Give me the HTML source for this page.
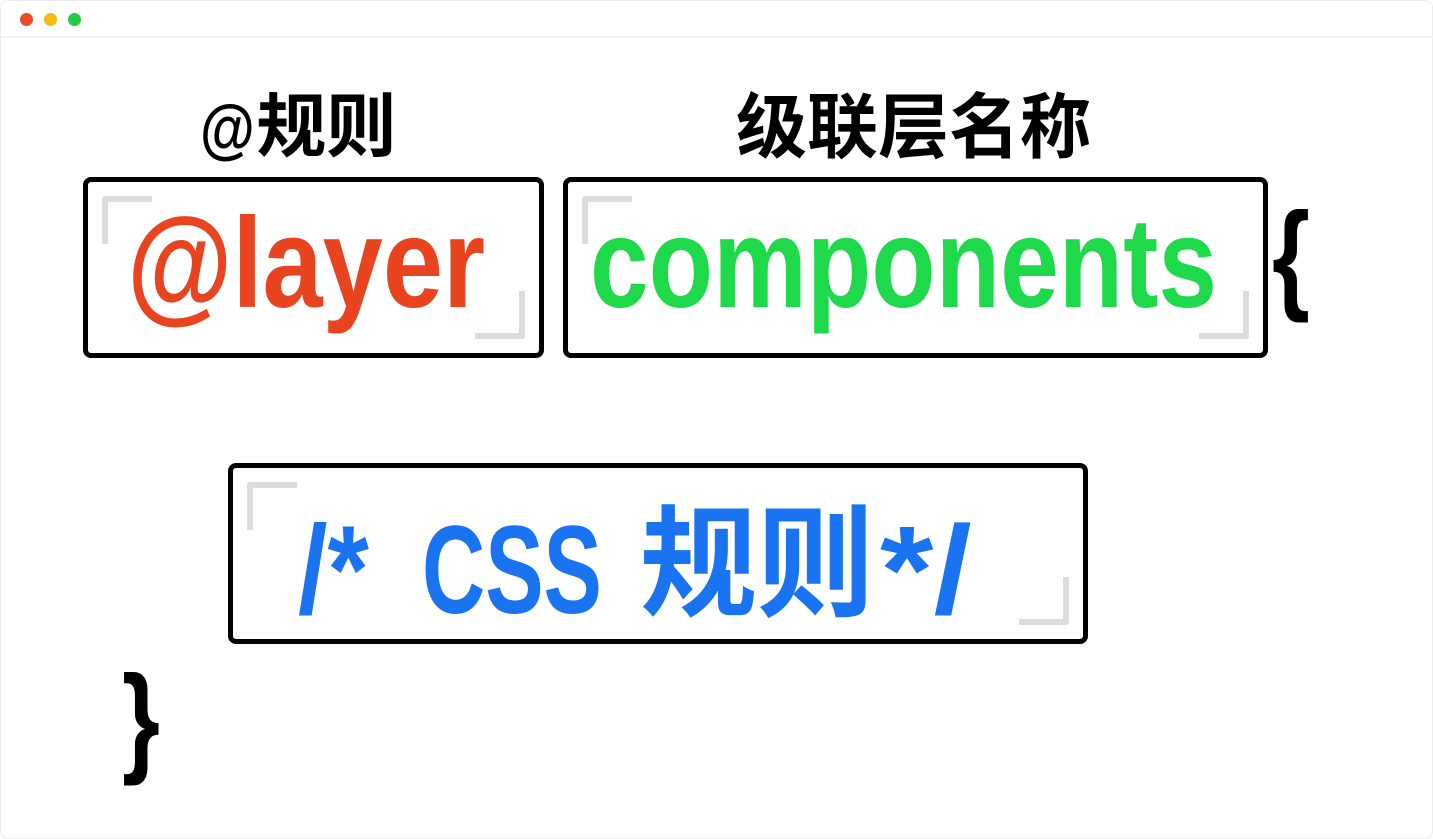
<!DOCTYPE html>
<html><head><meta charset="utf-8"><style>
html,body{margin:0;padding:0;background:#fff;}
body{width:1433px;height:839px;position:relative;overflow:hidden;font-family:"Liberation Sans","Noto Sans CJK SC",sans-serif;font-weight:bold;}
.frame{position:absolute;left:0;top:0;width:1431px;height:837px;border:1px solid #ececec;border-radius:8px;}
.bar{position:absolute;left:0;top:0;width:1433px;height:36px;border-bottom:2px solid #f2f2f2;}
.dot{position:absolute;top:13px;width:13px;height:13px;border-radius:50%;}
.box{position:absolute;border:5px solid #000;border-radius:8px;box-sizing:border-box;}
.tl,.br{position:absolute;width:50px;height:48px;box-sizing:border-box;border-color:#dcdcdc;border-style:solid;border-width:0;}
.tl{left:14px;top:14px;border-left-width:6px;border-top-width:6px;border-radius:3px 0 0 0;}
.br{right:14px;bottom:14px;border-right-width:6px;border-bottom-width:6px;border-radius:0 0 3px 0;}
.t{position:absolute;line-height:1;white-space:nowrap;transform-origin:left top;}
.cjk{font-family:"Noto Sans CJK SC","WenQuanYi Zen Hei",sans-serif;font-weight:bold;}
</style></head><body>
<div class="frame"></div>
<div class="bar"></div>
<div class="dot" style="left:20px;background:#ea4a2a"></div>
<div class="dot" style="left:44px;background:#f5b918"></div>
<div class="dot" style="left:68px;background:#22cc44"></div>

<div class="t" style="left:200px;top:87px;font-size:70px;color:#000"><span style="font-size:66px;display:inline-block;transform:scaleX(0.85);transform-origin:left;margin-right:-8px">@</span><span class="cjk">规则</span></div>
<div class="t cjk" style="left:736px;top:87px;font-size:71px;color:#000">级联层名称</div>

<div class="box" style="left:83px;top:177px;width:461px;height:181px"><div class="tl"></div><div class="br"></div></div>
<div class="box" style="left:563px;top:177px;width:705px;height:181px"><div class="tl"></div><div class="br"></div></div>
<div class="box" style="left:228px;top:463px;width:860px;height:181px"><div class="tl"></div><div class="br"></div></div>

<div class="t" style="left:127px;top:200px;font-size:128px;color:#e8441f;transform:scaleX(0.845)">@layer</div>
<div class="t" style="left:590px;top:200px;font-size:128px;color:#1ed94a;transform:scaleX(0.824)">components</div>
<div class="t" style="left:1272px;top:194px;font-size:122px;color:#000;transform:scaleX(0.8)">{</div>
<div class="t" style="left:122px;top:657px;font-size:122px;color:#000;transform:scaleX(0.8)">}</div>

<div class="t" style="left:298px;top:508px;font-size:125px;color:#1a73f0;transform:scaleX(0.85)">/*</div>
<div class="t" style="left:422px;top:508px;font-size:125px;color:#1a73f0;transform:scaleX(0.7)">CSS</div>
<div class="t cjk" style="left:640px;top:494px;font-size:122px;color:#1a73f0;transform:scaleX(0.96)">规则</div>
<div class="t" style="left:880px;top:508px;font-size:125px;color:#1a73f0;transform:scaleX(1.1)">*/</div>
</body></html>
